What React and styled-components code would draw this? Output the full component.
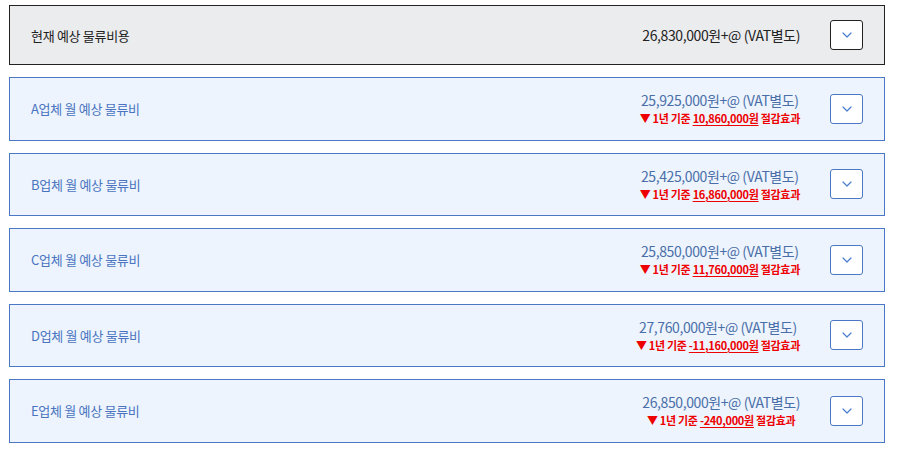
import styled, { createGlobalStyle } from "styled-components";

const rows = [
  { name: "A업체 월 예상 물류비", price: "25,925,000원+@ (VAT별도)", saving: "10,860,000원" },
  { name: "B업체 월 예상 물류비", price: "25,425,000원+@ (VAT별도)", saving: "16,860,000원" },
  { name: "C업체 월 예상 물류비", price: "25,850,000원+@ (VAT별도)", saving: "11,760,000원" },
  { name: "D업체 월 예상 물류비", price: "27,760,000원+@ (VAT별도)", saving: "-11,160,000원" },
  { name: "E업체 월 예상 물류비", price: "26,850,000원+@ (VAT별도)", saving: "-240,000원" },
];

const Chevron = () => (
  <svg width="10" height="6" viewBox="0 0 10 6" fill="none">
    <path d="M1 1l4 4 4-4" stroke="#4a7fd0" strokeWidth="1.2" strokeLinecap="round" strokeLinejoin="round" />
  </svg>
);

export default function App() {
  return (
    <>
      <GlobalStyle />
      <Page>
        <Row $current>
          <Label $current>현재 예상 물류비용</Label>
          <Right>
            <Amount>
              <Price $current>26,830,000원+@ (VAT별도)</Price>
            </Amount>
            <Toggle $current>
              <Chevron />
            </Toggle>
          </Right>
        </Row>

        {rows.map((r) => (
          <Row key={r.name}>
            <Label>{r.name}</Label>
            <Right>
              <Amount>
                <Price>{r.price}</Price>
                <Saving>
                  <Tri>▼</Tri> 1년 기준 <u>{r.saving}</u> 절감효과
                </Saving>
              </Amount>
              <Toggle>
                <Chevron />
              </Toggle>
            </Right>
          </Row>
        ))}
      </Page>
    </>
  );
}

const GlobalStyle = createGlobalStyle`
  body {
    margin: 0;
    background: #fff;
    font-family: "Noto Sans CJK KR", "Noto Sans", sans-serif;
  }
`;

const Page = styled.div`
  display: flex;
  flex-direction: column;
  gap: 12px;
  padding: 5px 12px 0 9px;
`;

const Row = styled.div`
  display: flex;
  align-items: center;
  justify-content: space-between;
  height: ${(p) => (p.$current ? "60px" : "63.5px")};
  box-sizing: border-box;
  padding: 0 21px 0 21px;
  background: ${(p) => (p.$current ? "#ebecee" : "#edf4fe")};
  border: 1px solid ${(p) => (p.$current ? "#222" : "#4a78c4")};
`;

const Label = styled.div`
  font-size: 13px;
  letter-spacing: -0.3px;
  color: ${(p) => (p.$current ? "#222" : "#4a74c0")};
`;

const Right = styled.div`
  display: flex;
  align-items: center;
  gap: 30px;
`;

const Amount = styled.div`
  display: flex;
  flex-direction: column;
  align-items: center;
  gap: 2px;
`;

const Price = styled.div`
  font-size: 14px;
  letter-spacing: -0.4px;
  line-height: 17px;
  color: ${(p) => (p.$current ? "#222" : "#4a6fa8")};
`;

const Saving = styled.div`
  font-size: 11px;
  font-weight: 700;
  letter-spacing: -0.3px;
  line-height: 14px;
  color: #ee0000;

  u {
    text-underline-offset: 2px;
  }
`;

const Tri = styled.span`
  font-size: 11px;
`;

const Toggle = styled.div`
  width: 33px;
  height: 30px;
  box-sizing: border-box;
  display: grid;
  place-items: center;
  background: #fff;
  border-radius: 3px;
  border: 1px solid ${(p) => (p.$current ? "#222" : "#4a78c4")};
`;
